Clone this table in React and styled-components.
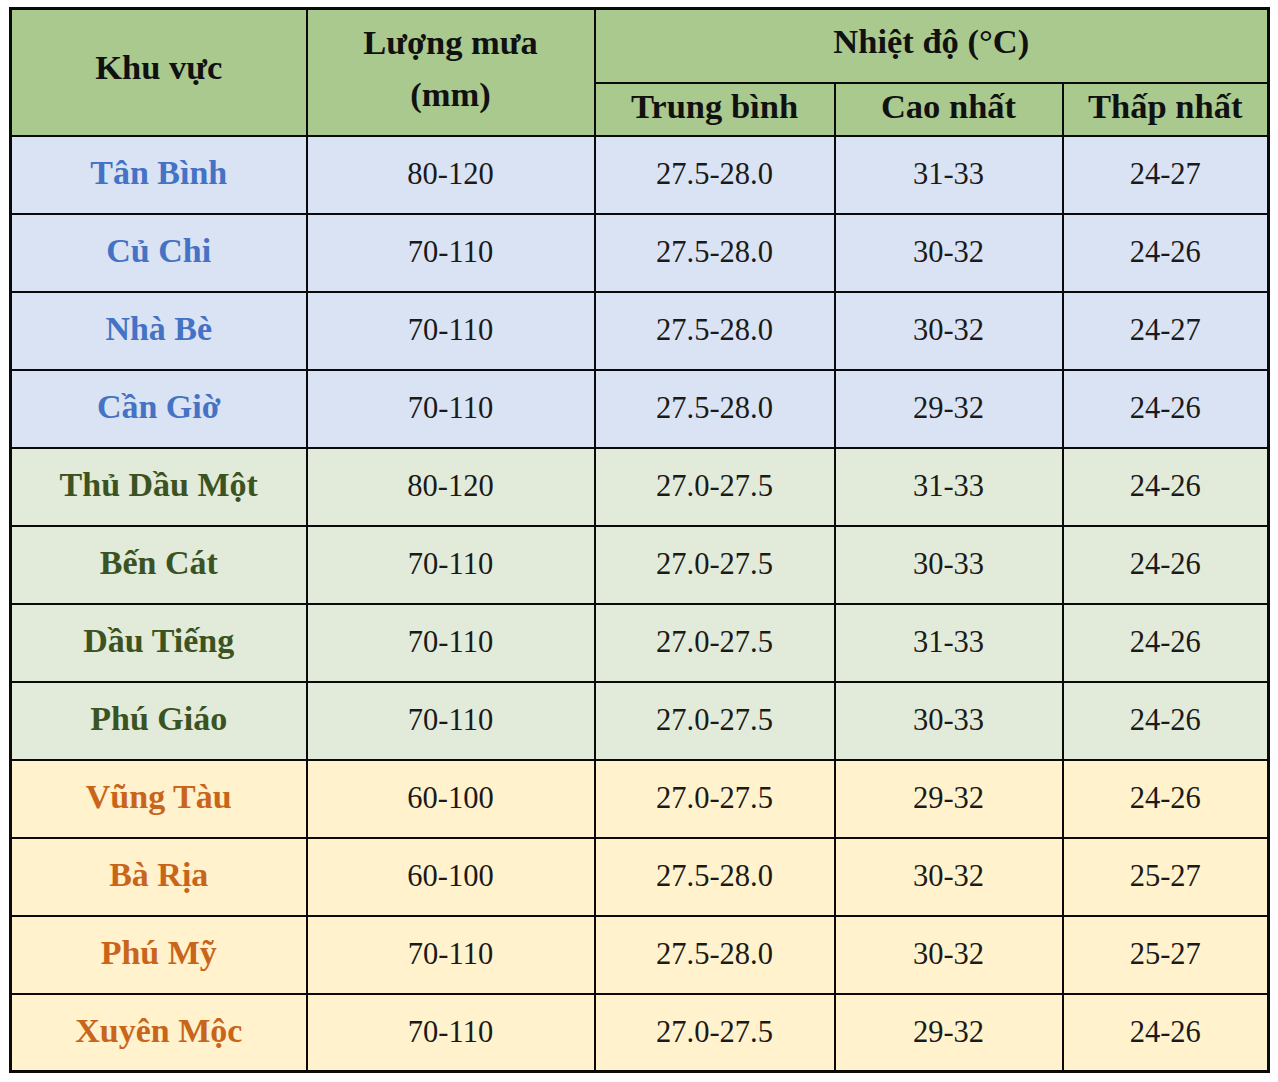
import React from 'react'
import styled, { createGlobalStyle } from 'styled-components'

const GlobalStyle = createGlobalStyle`
  body {
    margin: 0;
    background: #ffffff;
    font-family: "Liberation Serif", "Times New Roman", serif;
  }
`

const rows = [
  { name: 'Tân Bình', rain: '80-120', avg: '27.5-28.0', high: '31-33', low: '24-27', tone: 'blue' },
  { name: 'Củ Chi', rain: '70-110', avg: '27.5-28.0', high: '30-32', low: '24-26', tone: 'blue' },
  { name: 'Nhà Bè', rain: '70-110', avg: '27.5-28.0', high: '30-32', low: '24-27', tone: 'blue' },
  { name: 'Cần Giờ', rain: '70-110', avg: '27.5-28.0', high: '29-32', low: '24-26', tone: 'blue' },
  { name: 'Thủ Dầu Một', rain: '80-120', avg: '27.0-27.5', high: '31-33', low: '24-26', tone: 'green' },
  { name: 'Bến Cát', rain: '70-110', avg: '27.0-27.5', high: '30-33', low: '24-26', tone: 'green' },
  { name: 'Dầu Tiếng', rain: '70-110', avg: '27.0-27.5', high: '31-33', low: '24-26', tone: 'green' },
  { name: 'Phú Giáo', rain: '70-110', avg: '27.0-27.5', high: '30-33', low: '24-26', tone: 'green' },
  { name: 'Vũng Tàu', rain: '60-100', avg: '27.0-27.5', high: '29-32', low: '24-26', tone: 'orange' },
  { name: 'Bà Rịa', rain: '60-100', avg: '27.5-28.0', high: '30-32', low: '25-27', tone: 'orange' },
  { name: 'Phú Mỹ', rain: '70-110', avg: '27.5-28.0', high: '30-32', low: '25-27', tone: 'orange' },
  { name: 'Xuyên Mộc', rain: '70-110', avg: '27.0-27.5', high: '29-32', low: '24-26', tone: 'orange' },
]

// nền và màu chữ theo từng vùng
const tones = {
  blue: { bg: '#dae3f3', fg: '#4472c4' },
  green: { bg: '#e2ebd9', fg: '#3b5323' },
  orange: { bg: '#fff2cc', fg: '#c9651b' },
}

const App = () => {
  return (
    <Page>
      <GlobalStyle />
      <Table>
        <colgroup>
          <col style={{ width: 296 }} />
          <col style={{ width: 288 }} />
          <col style={{ width: 240 }} />
          <col style={{ width: 228 }} />
          <col style={{ width: 206 }} />
        </colgroup>
        <thead>
          <HeadRow $h={74}>
            <HeadCell rowSpan={2} $pb={10}>Khu vực</HeadCell>
            <HeadCell rowSpan={2} $pb={8}>
              <TwoLines>Lượng mưa<br />(mm)</TwoLines>
            </HeadCell>
            <HeadCell colSpan={3} $pb={8}>Nhiệt độ (°C)</HeadCell>
          </HeadRow>
          <HeadRow $h={53}>
            <HeadCell $pb={6}>Trung bình</HeadCell>
            <HeadCell $pb={6}>Cao nhất</HeadCell>
            <HeadCell $pb={6}>Thấp nhất</HeadCell>
          </HeadRow>
        </thead>
        <tbody>
          {rows.map((r) => (
            <BodyRow key={r.name} $bg={tones[r.tone].bg}>
              <NameCell $fg={tones[r.tone].fg}>{r.name}</NameCell>
              <NumCell>{r.rain}</NumCell>
              <NumCell>{r.avg}</NumCell>
              <NumCell>{r.high}</NumCell>
              <NumCell>{r.low}</NumCell>
            </BodyRow>
          ))}
        </tbody>
      </Table>
    </Page>
  )
}

const Page = styled.div`
  padding: 7px 0 0 9px;
`

const Table = styled.table`
  border-collapse: collapse;
  table-layout: fixed;
  width: 1258px;
  border: 3px solid #0a0a0a;
  font-family: "Liberation Serif", "Times New Roman", serif;
`

const HeadRow = styled.tr`
  height: ${(p) => p.$h}px;
  background: #a9c98f;
`

const HeadCell = styled.th`
  border: 2.5px solid #0a0a0a;
  padding: 0 0 ${(p) => p.$pb}px;
  font-family: "Liberation Serif", "Times New Roman", serif;
  font-size: 34.5px;
  font-weight: 700;
  color: #111;
  text-align: center;
  vertical-align: middle;
`

const TwoLines = styled.span`
  display: block;
  line-height: 52px;
`

const BodyRow = styled.tr`
  height: 78px;
  background: ${(p) => p.$bg};
`

const NameCell = styled.td`
  border: 2.5px solid #0a0a0a;
  text-align: center;
  font-family: "Liberation Serif", "Times New Roman", serif;
  font-size: 34px;
  font-weight: 700;
  color: ${(p) => p.$fg};
  padding-bottom: 4px;
`

const NumCell = styled.td`
  border: 2.5px solid #0a0a0a;
  text-align: center;
  font-family: "Liberation Serif", "Times New Roman", serif;
  font-size: 30.5px;
  color: #1a1a1a;
`

export default App
